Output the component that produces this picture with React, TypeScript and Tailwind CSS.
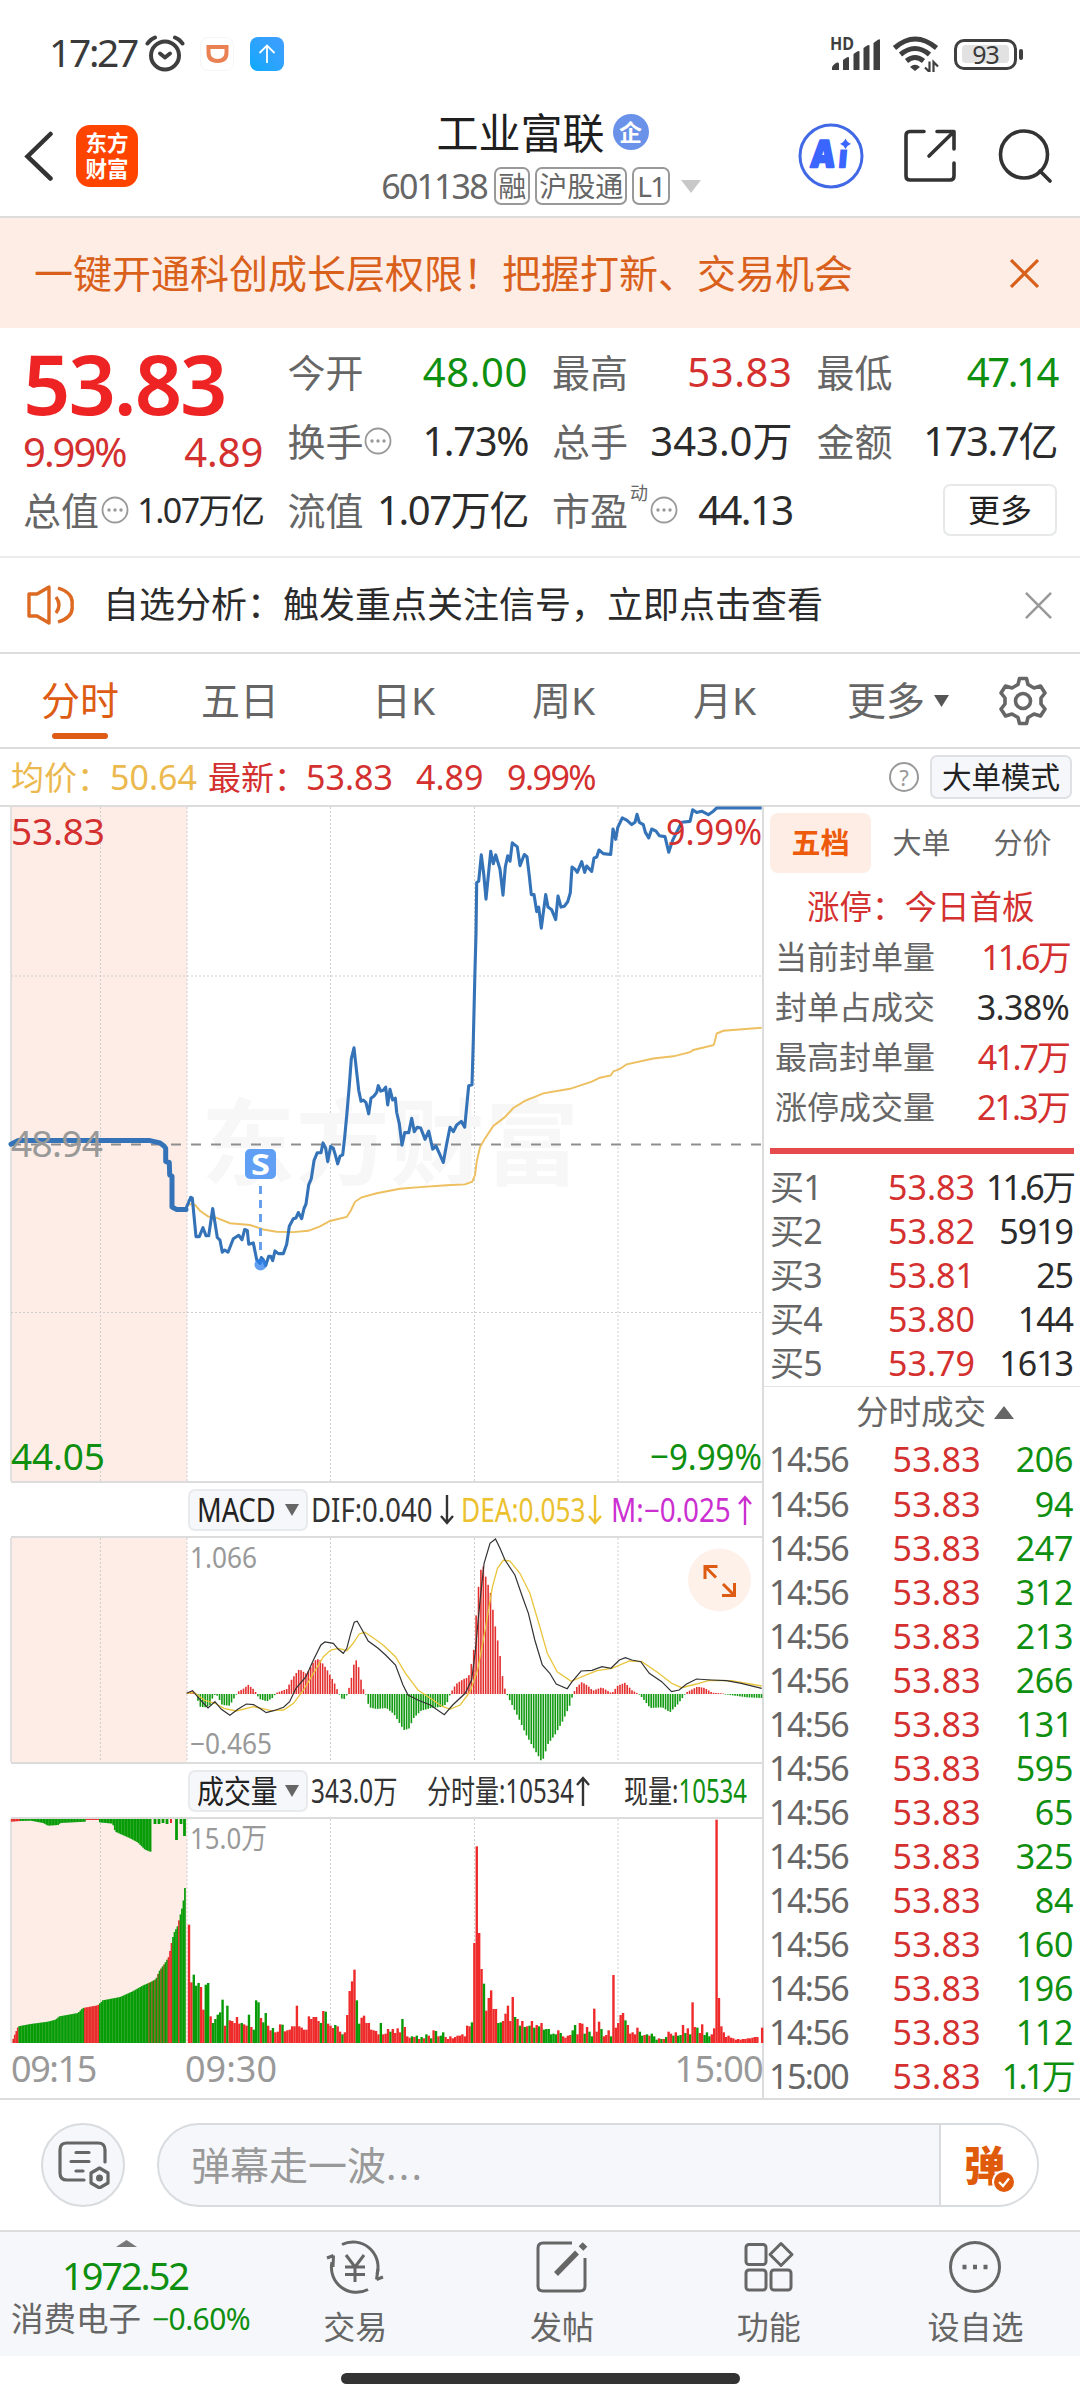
import type { ReactNode } from "react";

type Point = [number, number];

const quotes = [
  { label: "今开", value: "48.00", color: "text-[#0f8f0f] tracking-[0.015em]" },
  { label: "最高", value: "53.83", color: "text-[#d3302f] tracking-[0.015em]" },
  { label: "最低", value: "47.14", color: "text-[#0f8f0f] tracking-[-0.06em]" },
  { label: "换手", value: "1.73%", color: "text-[#2b2b2b] tracking-[-0.035em]", info: true },
  { label: "总手", value: "343.0万", color: "text-[#2b2b2b]" },
  { label: "金额", value: "173.7亿", color: "text-[#2b2b2b] tracking-[-0.035em]" },
];

const periods = [
  { name: "五日", cls: "w-[171px]" },
  { name: "日K", cls: "w-[160px]" },
  { name: "周K", cls: "w-[161px]" },
  { name: "月K", cls: "w-[154px]" },
];

const limitRows = [
  { label: "当前封单量", value: "11.6万", color: "text-[#d3302f] tracking-[-0.08em]" },
  { label: "封单占成交", value: "3.38%", color: "text-[#2b2b2b] tracking-[-0.02em]" },
  { label: "最高封单量", value: "41.7万", color: "text-[#d3302f] tracking-[-0.06em]" },
  { label: "涨停成交量", value: "21.3万", color: "text-[#d3302f] tracking-[-0.055em]" },
];

const bids = [
  ["买1", "53.83", "11.6万"],
  ["买2", "53.82", "5919"],
  ["买3", "53.81", "25"],
  ["买4", "53.80", "144"],
  ["买5", "53.79", "1613"],
];

const trades = [
  ["14:56", "206"],
  ["14:56", "94"],
  ["14:56", "247"],
  ["14:56", "312"],
  ["14:56", "213"],
  ["14:56", "266"],
  ["14:56", "131"],
  ["14:56", "595"],
  ["14:56", "65"],
  ["14:56", "325"],
  ["14:56", "84"],
  ["14:56", "160"],
  ["14:56", "196"],
  ["14:56", "112"],
  ["15:00", "1.1万"],
];

// call auction, 09:15 - 09:30
const auction: Point[] = [
  [33, 771], [55, 763], [450, 763], [480, 768], [492, 775], [497, 780], [497, 810], [508, 812],
  [509, 840], [516, 843], [516, 912], [530, 917], [558, 917],
];

const price: Point[] = [
  [558, 915], [572, 890], [577, 892], [588, 978], [598, 978], [609, 958], [618, 976], [626, 976],
  [638, 915], [652, 980], [660, 986], [667, 1013], [674, 1008], [684, 1013], [700, 983], [716, 975],
  [726, 985], [734, 962], [742, 964], [746, 995], [760, 992], [770, 1030], [780, 1038], [784, 1025],
  [790, 1030], [797, 1043], [806, 1022], [812, 1022], [818, 1032], [825, 1010], [835, 1016], [850, 1016],
  [860, 995], [868, 955], [880, 938], [888, 936], [895, 924], [905, 938], [912, 915], [918, 905],
  [926, 862], [934, 848], [942, 808], [952, 790], [963, 790], [969, 768], [977, 780], [983, 810],
  [992, 776], [1000, 780], [1006, 795], [1013, 815], [1020, 798], [1028, 795], [1034, 755], [1041, 700],
  [1048, 640], [1054, 580], [1062, 555], [1070, 610], [1076, 650], [1083, 675], [1090, 672], [1098, 678],
  [1106, 703], [1113, 668], [1122, 663], [1130, 655], [1135, 640], [1142, 652], [1150, 650], [1157, 643],
  [1163, 683], [1170, 648], [1178, 672], [1186, 668], [1190, 700], [1198, 725], [1206, 773], [1214, 745],
  [1226, 745], [1235, 713], [1243, 743], [1252, 733], [1262, 735], [1275, 760], [1286, 742], [1298, 782],
  [1308, 775], [1320, 795], [1330, 812], [1340, 770], [1350, 733], [1360, 743], [1370, 728], [1384, 720],
  [1394, 733], [1406, 640], [1416, 638], [1420, 540], [1425, 380], [1428, 300], [1430, 185], [1436, 182],
  [1444, 123], [1451, 165], [1458, 222], [1472, 115], [1480, 143], [1487, 123], [1500, 155], [1509, 213],
  [1516, 150], [1523, 125], [1530, 137], [1537, 96], [1552, 105], [1560, 147], [1573, 122], [1581, 127],
  [1588, 170], [1594, 212], [1602, 212], [1610, 250], [1616, 240], [1624, 287], [1637, 212], [1644, 240],
  [1655, 246], [1667, 268], [1674, 215], [1683, 240], [1693, 238], [1703, 228], [1711, 208], [1716, 150],
  [1725, 155], [1732, 162], [1745, 138], [1754, 162], [1760, 148], [1775, 160], [1782, 130], [1790, 128],
  [1797, 112], [1810, 120], [1832, 122], [1839, 65], [1847, 88], [1853, 62], [1867, 40], [1880, 45],
  [1895, 55], [1905, 50], [1911, 32], [1918, 50], [1930, 55], [1936, 72], [1946, 85], [1955, 65],
  [1968, 70], [1978, 80], [1995, 82], [2006, 117], [2018, 90], [2030, 72], [2045, 50], [2070, 48],
  [2078, 22], [2090, 28], [2105, 25], [2125, 33], [2140, 25], [2150, 18], [2285, 18],
];

const average: Point[] = [
  [558, 908], [575, 905], [585, 907], [600, 920], [625, 933], [650, 936], [690, 948], [750, 952],
  [790, 962], [830, 967], [880, 968], [925, 965], [960, 955], [990, 943], [1040, 934], [1052, 920],
  [1065, 900], [1085, 890], [1130, 881], [1200, 871], [1260, 867], [1340, 863], [1395, 861], [1417, 855],
  [1425, 840], [1430, 810], [1440, 778], [1455, 758], [1480, 730], [1515, 710], [1540, 690], [1575, 674],
  [1630, 657], [1710, 647], [1775, 631], [1800, 622], [1832, 617], [1840, 608], [1860, 602], [1880, 592],
  [1960, 579], [2020, 574], [2070, 565], [2080, 560], [2140, 549], [2143, 545], [2150, 523], [2170, 517],
  [2285, 510],
];

const dif: Point[] = [
  [375, 640], [387, 632], [400, 655], [418, 684], [432, 665], [445, 688], [462, 706], [478, 688],
  [495, 672], [510, 674], [522, 685], [535, 698], [550, 692], [570, 682], [582, 665], [595, 625],
  [615, 590], [630, 540], [645, 495], [653, 486], [670, 490], [680, 508], [690, 520], [697, 505],
  [705, 460], [712, 427], [718, 424], [728, 450], [740, 483], [760, 505], [775, 525], [795, 555],
  [810, 615], [820, 645], [840, 660], [865, 675], [893, 704], [910, 675], [935, 640], [948, 600],
  [955, 520], [965, 360], [973, 250], [985, 190], [996, 177], [1005, 205], [1015, 240], [1035, 285],
  [1050, 350], [1062, 400], [1075, 480], [1090, 555], [1105, 580], [1118, 612], [1140, 626], [1150, 605],
  [1168, 573], [1190, 571], [1210, 560], [1228, 565], [1245, 540], [1257, 533], [1270, 540], [1288, 545],
  [1305, 580], [1330, 605], [1350, 635], [1365, 630], [1380, 612], [1400, 597], [1430, 600], [1460, 602],
  [1490, 610], [1531, 625],
];

const dea: Point[] = [
  [375, 640], [390, 637], [410, 660], [432, 670], [450, 685], [475, 693], [510, 680], [545, 692],
  [570, 690], [590, 670], [610, 630], [630, 580], [650, 530], [665, 510], [680, 505], [697, 512],
  [710, 490], [722, 462], [733, 457], [745, 468], [770, 495], [795, 530], [815, 580], [840, 630],
  [865, 655], [890, 680], [905, 687], [925, 675], [945, 635], [960, 570], [975, 450], [990, 320],
  [1000, 265], [1012, 240], [1025, 243], [1045, 280], [1065, 340], [1085, 440], [1100, 520], [1120, 575],
  [1148, 604], [1170, 590], [1200, 572], [1230, 565], [1265, 543], [1290, 545], [1320, 575], [1350, 610],
  [1370, 623], [1400, 612], [1425, 601], [1470, 602], [1531, 618],
];

const histogram: Point[] = [
  [375, 0], [385, 12], [392, 0], [400, -38], [410, -40], [420, -35], [428, -2], [435, -5], [445, -33],
  [460, -35], [472, -5], [478, 8], [490, 18], [497, 28], [510, 12], [514, 0], [520, -15], [535, -22],
  [548, -10], [553, 3], [575, 15], [585, 45], [600, 75], [615, 60], [630, 100], [640, 106], [655, 75],
  [670, 35], [680, 0], [688, -20], [697, 0], [705, 50], [712, 108], [718, 90], [727, 20], [735, -5],
  [740, -40], [755, -45], [775, -42], [790, -60], [810, -108], [820, -105], [830, -72], [845, -50],
  [865, -42], [890, -38], [900, -20], [903, 0], [915, 30], [930, 45], [940, 50], [950, 120], [957, 270],
  [962, 350], [968, 395], [975, 350], [985, 300], [992, 220], [1000, 150], [1006, 90], [1010, 30],
  [1017, 0], [1020, -10], [1040, -70], [1055, -120], [1070, -160], [1088, -205], [1100, -150],
  [1115, -120], [1130, -80], [1145, -30], [1150, 0], [1157, 20], [1168, 36], [1180, 25], [1190, 10],
  [1208, 20], [1222, 8], [1228, 2], [1240, 25], [1255, 34], [1268, 12], [1282, 0], [1290, -12],
  [1305, -42], [1330, -40], [1345, -55], [1360, -32], [1372, -8], [1378, 5], [1400, 22], [1415, 18],
  [1430, 4], [1450, 2], [1465, -3], [1500, -10], [1531, -12],
];

// one entry a minute, negative = falling
const volume = [
  355, 182, -205, -172, -180, 168, 100, -175, -180, 80, -60, -72, -85, -92, -130, 52, -112, 68, 66, 60,
  78, 58, -60, 56, 52, -85, 48, -40, -128, -122, 75, -62, -90, 52, 38, -45, 32, 34, 56, -55,
  35, 38, 40, 50, 50, 112, 50, 46, 40, 40, 80, 72, 78, 78, 66, -60, 96, -94, 58, 52,
  45, -54, 50, 34, -26, 32, 84, 156, 185, 220, -128, -58, 76, 82, 60, 60, 40, 38, 36, 26,
  -60, 26, 28, 42, -34, 42, 30, 44, 32, -72, 48, 20, 16, -20, 18, -22, 12, -18, 14, -26,
  22, -14, 38, -36, 20, -22, -32, 18, 12, 20, 14, 18, 22, 22, 26, 20, 52, 50, -62, 300,
  590, 330, 222, -178, 97, 135, 158, 102, 102, -60, -62, 66, 88, 112, 66, 138, -78, 72, -52, 66,
  -48, 50, -52, 66, -46, 54, -50, 60, -40, -42, -42, -26, -28, -26, 38, -30, 20, 16, 22, 24,
  -38, -54, 26, 60, 58, -28, 48, -34, -20, 103, 34, 64, -42, 20, 24, 38, -20, 204, 46, 60,
  84, 90, -68, 54, 28, 32, 26, 46, -34, -22, 24, -26, 22, -28, -20, -10, 14, -12, 12, -18,
  34, 28, -22, 32, -22, -24, 54, -30, 44, -26, 122, 48, -46, 30, 56, -24, -32, -20, 26, 44,
  670, 135, 50, 32, 18, 22, 16, 14, 10, 12, 10, 12, 12, 14, 14, 16, 18, 18, 0, 46,
];

const auctionVolume: Point[] = [
  [22, 0], [28, 25], [35, 50], [60, 57], [95, 64], [110, 70], [118, 80], [155, 90], [165, 105], [195, 113],
  [205, 128], [240, 138], [265, 155], [285, 172], [300, 182], [312, 192], [318, 215], [330, 240],
  [338, 260], [343, 300], [348, 330], [355, 350], [360, 380], [366, 415], [370, 465], [373, 465],
];

const unmatched: Point[] = [
  [22, 8], [38, 6], [60, 5], [85, 12], [95, 20], [115, 18], [120, 12], [170, 8], [172, 3], [197, 3],
  [198, 10], [225, 14], [230, 38], [245, 48], [260, 58], [275, 70], [290, 92], [300, 98], [303, 98],
];

const line = (points: Point[], sx: number, sy: number, dy: number) =>
  points.map(([x, y]) => `${(x / sx - 11).toFixed(1)},${(y / sy - dy).toFixed(1)}`).join(" ");

const sample = (points: Point[], x: number) => {
  const i = points.findIndex((p) => p[0] >= x);
  if (i <= 0) return points[i === 0 ? 0 : points.length - 1][1];
  const [x0, y0] = points[i - 1];
  const [x1, y1] = points[i];
  return y0 + ((y1 - y0) * (x - x0)) / (x1 - x0);
};

const Squeeze = ({ width, scale, children }: { width: string; scale: string; children: ReactNode }) => (
  <span className={`${width} shrink-0`}>
    <span className={`inline-block origin-left whitespace-nowrap ${scale}`}>{children}</span>
  </span>
);

const InfoDots = () => (
  <svg className="size-[28px] shrink-0" viewBox="0 0 28 28" fill="none" stroke="#999">
    <circle cx="14" cy="14" r="12.500" strokeWidth="1.800" />
    <g fill="#999" stroke="none">
      <circle cx="8" cy="14" r="1.700" />
      <circle cx="14" cy="14" r="1.700" />
      <circle cx="20" cy="14" r="1.700" />
    </g>
  </svg>
);

const Cross = ({ className, width }: { className: string; width: number }) => (
  <svg className={className} viewBox="0 0 28 28" fill="none" stroke="currentColor" strokeWidth={width}>
    <path d="M1 1L27 27M27 1L1 27" />
  </svg>
);

const Grid = ({ height }: { height: number }) => (
  <>
    <rect width="176" height={height} fill="#fdede6" />
    <g stroke="#cfcfcf" strokeWidth="1" strokeDasharray="2 2">
      {[89.5, 176, 319.5, 463.5, 607].map((x) => (
        <line key={x} x1={x} x2={x} y1="0" y2={height} />
      ))}
    </g>
    <path d={`M0 0V${height}`} stroke="#d9d9d9" strokeWidth="1.500" />
  </>
);

const StatusBar = () => (
  <div className="flex h-[108px] items-center pl-[49px] pr-[57px] text-[#3a3a3a]">
    <span className="-mt-[3px] w-[95px] text-[39px] tracking-[-0.06em]">17:27</span>
    <svg className="h-[38px] w-[42px]" viewBox="0 0 42 38" fill="none" stroke="#3f3f3f" strokeWidth="4" strokeLinecap="round" strokeLinejoin="round">
      <circle cx="21" cy="20.500" r="14" />
      <path d="M16 18.500L21 22.500L26 18.500" />
      <path d="M3.500 8.500Q6 4.500 11 2.500M38.500 8.500Q36 4.500 31 2.500" />
    </svg>
    <div className="ml-[14px] flex h-[34px] w-[34px] items-center justify-center rounded-lg border border-[#f6f6f6]">
      <svg className="h-[20px] w-[23px]" viewBox="0 0 23 20" fill="none" stroke="#ea8152" strokeWidth="4">
        <path d="M.5 3H20.500V8.500Q20.500 17 11.500 17Q2.500 17 2.500 8.500V3" />
      </svg>
    </div>
    <div className="ml-[16px] flex size-[34px] items-center justify-center rounded-lg bg-gradient-to-bl from-[#3f9dff] to-[#02a9fb]">
      <svg className="h-[20px] w-[18px]" viewBox="0 0 18 20" fill="none" stroke="#fff" strokeWidth="1.800">
        <path d="M9 19V2M1.500 9L9 1.500L16.500 9" />
      </svg>
    </div>
    <div className="ml-auto flex items-center">
      <svg className="h-[36px] w-[50px] overflow-visible" viewBox="0 0 50 36">
        <text x="0" y="13.500" fontSize="17" fontWeight="700" textLength="24" lengthAdjust="spacingAndGlyphs" fill="#3f3f3f">HD</text>
        <g fill="#3f3f3f">
          <path d="M2 32Q2 29 7 26.500Q9 26 9 28V34H2Z" />
          <path d="M13 24Q19 19.500 19 22V34H13Z" />
          <path d="M23.500 18Q29.500 13.500 29.500 16V34H23.500Z" />
          <path d="M33.500 12Q39.500 7.500 39.500 10V34H33.500Z" />
          <path d="M43.500 7Q50 1.500 50 4V34H43.500Z" />
        </g>
      </svg>
      <svg className="ml-[12px] h-[36px] w-[48px]" viewBox="0 0 48 36" fill="none" stroke="#3f3f3f" strokeWidth="5">
        <path d="M2.500 12Q23 -6 44.500 12M8.500 18.500Q23 6.500 37.500 18.500M14.500 25Q23 18 31.500 25" />
        <path d="M18 31L23 35L28 31Q23 26.500 18 31Z" fill="#3f3f3f" stroke="none" />
        <path d="M37.500 25.500V36L33 31.500M41.500 36V26L46 30.500" strokeWidth="2.200" />
      </svg>
      <div className="ml-[14px] flex h-[31px] w-[63px] items-center justify-center rounded-[10px] border-[3px] border-[#3f3f3f]">
        <div className="flex h-[18px] w-[47px] items-center justify-center rounded-sm bg-[#e2e2e2] text-[25px] leading-none tracking-[-0.04em]">93</div>
      </div>
      <div className="ml-[2px] h-[11px] w-[4px] rounded-full bg-[#3f3f3f]" />
    </div>
  </div>
);

const Header = () => (
  <div className="flex h-[110px] border-b-2 border-[#dcdcdc] pl-[24px] pr-[28px]">
    <div className="flex w-[344px] items-center pb-[12px]">
      <svg className="h-[50px] w-[30px]" viewBox="0 0 30 50" fill="none" stroke="#333" strokeWidth="4.500" strokeLinecap="round">
        <path d="M26.500 3L3.500 25.500L26.500 47.500" />
      </svg>
      <div className="ml-[22px] flex size-[62px] flex-col items-center justify-center rounded-[14px] bg-[#ff4400] text-[21.500px] font-semibold leading-[26px] text-white">
        <span>东方</span>
        <span>财富</span>
      </div>
    </div>
    <div className="flex w-[346px] flex-col items-center">
      <div className="flex h-[48px] items-center pl-[3px] text-[42px] text-[#1f1f1f]">
        工业富联
        <span className="ml-[8px] flex size-[36px] items-center justify-center rounded-full bg-[#6a92e8] text-[23px] font-bold leading-none text-white">企</span>
      </div>
      <div className="mt-[10px] flex items-center gap-[5px] text-[#666]">
        <span className="mr-[1px] w-[107px] text-[34px] leading-[40px] tracking-[-0.055em]">601138</span>
        <span className="flex h-[38px] items-center rounded-[7px] border-2 border-[#999] px-[2px] text-[28px]">融</span>
        <span className="flex h-[38px] items-center rounded-[7px] border-2 border-[#999] px-[2px] text-[28px]">沪股通</span>
        <span className="flex h-[38px] items-center rounded-[7px] border-2 border-[#999] px-[3px] text-[28px] tracking-[-0.06em]">L1</span>
        <svg className="ml-[6px] h-[13px] w-[20px]" viewBox="0 0 20 13" fill="#c8c8c8">
          <path d="M0 0H20L10 13Z" />
        </svg>
      </div>
    </div>
    <div className="ml-auto flex items-center gap-[40px] pb-[13px]">
      <svg className="size-[66px]" viewBox="0 0 66 66">
        <circle cx="33" cy="33" r="31" fill="none" stroke="#4169e6" strokeWidth="3" />
        <g fontSize="37" fontWeight="900" fill="#3a66ff" stroke="#3a66ff" strokeWidth="2.500" strokeLinejoin="round" transform="translate(4 0) skewX(-5)">
          <text x="12.500" y="44.500" textLength="23" lengthAdjust="spacingAndGlyphs">A</text>
          <text x="40" y="44.500" textLength="8.500" lengthAdjust="spacingAndGlyphs">i</text>
        </g>
        <rect x="40" y="12" width="14" height="14.500" fill="#fff" />
        <path d="M47.500 15.500Q49 19.500 53 20.800Q49 22.500 47.500 26Q46 22.500 42 20.800Q46 19.500 47.500 15.500Z" fill="#3a66ff" />
      </svg>
      <svg className="size-[54px]" viewBox="0 0 54 54" fill="none" stroke="#333" strokeWidth="3.600" strokeLinejoin="round" strokeLinecap="round">
        <path d="M20 2.500H6Q2 2.500 2 6.500V47Q2 51 6 51H46Q50 51 50 47V34M33 2.500H50V20M49 3.500L25 27" />
      </svg>
      <svg className="size-[54px]" viewBox="0 0 54 54" fill="none" stroke="#333" strokeWidth="3.600" strokeLinecap="round">
        <circle cx="26" cy="25.500" r="23.500" />
        <path d="M42 42L52 52" />
      </svg>
    </div>
  </div>
);

const Quote = () => (
  <section className="grid h-[230px] grid-cols-4 grid-rows-[69px_69px_69px] gap-x-[24px] border-b-2 border-[#ececec] px-[23px] pt-[9px] text-[40px] leading-none">
    <div className="row-span-2 flex flex-col text-[#d3302f]">
      <span className="mt-[8px] text-[83px] font-semibold leading-[76px] tracking-[-0.025em] text-[#ee2424]">53.83</span>
      <div className="mt-[11px] flex justify-between">
        <span className="tracking-[-0.05em]">9.99%</span>
        <span>4.89</span>
      </div>
    </div>
    {quotes.map((q) => (
      <div key={q.label} className="flex items-center justify-between">
        <span className="flex items-center text-[38px] text-[#666]">
          {q.label}
          {q.info && <InfoDots />}
        </span>
        <span className={`whitespace-nowrap ${q.color}`}>{q.value}</span>
      </div>
    ))}
    <div className="flex items-center justify-between">
      <span className="flex items-center gap-[2px] text-[38px] text-[#666]">总值<InfoDots /></span>
      <span className="whitespace-nowrap text-[34px] tracking-[-0.045em] text-[#2b2b2b]">1.07万亿</span>
    </div>
    <div className="flex items-center justify-between">
      <span className="text-[38px] text-[#666]">流值</span>
      <span className="whitespace-nowrap tracking-[-0.035em] text-[#2b2b2b]">1.07万亿</span>
    </div>
    <div className="flex items-center justify-between">
      <span className="flex items-center text-[38px] text-[#666]">
        市盈
        <span className="mb-[34px] ml-[2px] mr-[2px] text-[18px]">动</span>
        <InfoDots />
      </span>
      <span className="tracking-[-0.04em] text-[#2b2b2b]">44.13</span>
    </div>
    <div className="flex items-center justify-end">
      <button className="h-[52px] w-[114px] rounded-[7px] border-2 border-[#e6e8ea] text-[32px] leading-none text-[#222]">更多</button>
    </div>
  </section>
);

const Tabs = () => (
  <nav className="flex h-[95px] items-center border-b-2 border-[#dcdcdc] pl-[41px] text-[39px] text-[#666]">
    <div className="relative w-[160px] text-[#dd5b12]">
      分时
      <span className="absolute left-[11px] top-[62px] h-[6px] w-[56px] rounded-full bg-[#dd5b12]" />
    </div>
    {periods.map((p) => (
      <div key={p.name} className={p.cls}>{p.name}</div>
    ))}
    <div className="flex w-[151px] items-center">
      更多
      <svg className="ml-[9px] h-[12px] w-[15px]" viewBox="0 0 15 12" fill="#555">
        <path d="M0 0H15L7.500 12Z" />
      </svg>
    </div>
    <svg className="size-[50px]" viewBox="0 0 50 50" fill="none" stroke="#666" strokeWidth="3.600" strokeLinejoin="round">
      <path d="M21.500 2.500H28.500L30 8.500L36 12L42.500 10L47 17L43 22V28L47 33L42.500 40L36 38L30 41.500L28.500 47.500H21.500L20 41.500L14 38L7.500 40L3 33L7 28V22L3 17L7.500 10L14 12L20 8.500Z" />
      <circle cx="25" cy="25" r="7.500" />
    </svg>
  </nav>
);

const PriceChart = () => (
  <svg className="h-[674px] w-[752px] overflow-visible" viewBox="0 0 752 674">
    <Grid height={674} />
    <g stroke="#cfcfcf" strokeDasharray="2 2">
      <path d="M0 169H752M0 505.500H752" />
    </g>
    <text x="190" y="371" fontSize="94" fontWeight="700" textLength="378" fill="#f7f7f7">东方财富</text>
    <path d="M0 337.500H752" stroke="#8e8e8e" strokeWidth="1.800" strokeDasharray="10 10" />
    <polyline points={line(average, 3, 2.24, 7)} fill="none" stroke="#edbf5e" strokeWidth="1.900" />
    <polyline points={line(auction, 3, 2.24, 7)} fill="none" stroke="#3573b8" strokeWidth="5" strokeLinejoin="round" strokeLinecap="round" />
    <polyline points={line(price, 3, 2.24, 7)} fill="none" stroke="#3573b8" strokeWidth="3.100" strokeLinejoin="round" />
    <path d="M249.500 379V446" stroke="#68a0ee" strokeWidth="3" strokeDasharray="8 6" />
    <circle cx="249.500" cy="457.500" r="6" fill="#2f80ed" opacity=".75" />
    <rect x="234" y="342" width="31" height="30" rx="5" fill="#619ff5" />
    <text x="249.500" y="367.500" fontSize="28" fontWeight="700" textAnchor="middle" textLength="19" lengthAdjust="spacingAndGlyphs" fill="#fff">S</text>
    <g fontSize="37">
      <text x="0" y="38" textLength="94" fill="#d3302f">53.83</text>
      <text x="751" y="38" textAnchor="end" textLength="96" lengthAdjust="spacingAndGlyphs" fill="#d3302f">9.99%</text>
      <text x="0" y="350" textLength="92" fill="#999">48.94</text>
      <text x="0" y="663" textLength="94" fill="#0f8f0f">44.05</text>
      <text x="751" y="663" textAnchor="end" textLength="112" lengthAdjust="spacingAndGlyphs" fill="#0f8f0f">−9.99%</text>
    </g>
  </svg>
);

const MacdChart = () => (
  <svg className="h-[224px] w-[752px] overflow-visible" viewBox="0 0 752 224">
    <Grid height={224} />
    {volume.map((_, i) => {
      const x = 377 + i * 4.82;
      const h = sample(histogram, x) / 3;
      return <rect key={i} x={x / 2.01 - 11} y={h > 0 ? 156 - h : 156} width="1.600" height={Math.max(Math.abs(h), 0.6)} fill={h > 0 ? "#e32f2e" : "#119a11"} />;
    })}
    <polyline points={line(dea, 2.01, 3, 58)} fill="none" stroke="#e9c53c" strokeWidth="1.300" />
    <polyline points={line(dif, 2.01, 3, 58)} fill="none" stroke="#333" strokeWidth="1.200" />
    <g fontSize="29" fill="#999">
      <text x="179" y="30" textLength="67" lengthAdjust="spacingAndGlyphs">1.066</text>
      <text x="179" y="216" textLength="82" lengthAdjust="spacingAndGlyphs">−0.465</text>
    </g>
    <circle cx="708.500" cy="42" r="31.500" fill="#fef1ea" />
    <path d="M694 41V28.500H706.500M694.500 29L705 39.500M711 57.500H723.500V45M723 57L712 46" fill="none" stroke="#dd5b12" strokeWidth="3" />
  </svg>
);

const VolumeChart = () => (
  <svg className="h-[224px] w-[752px] overflow-visible" viewBox="0 0 752 224">
    <Grid height={224} />
    {Array.from({ length: 117 }, (_, i) => {
      const x = 22 + i * 3;
      const h = sample(auctionVolume, x) / 3;
      const red = x < 35 || (x > 168 && x < 197) || (x > 335 && x < 344) || x === 358;
      const mixed = x > 297 && x < 332 && i % 2 === 0;
      return <rect key={i} x={x / 2.01 - 11} y={224 - h} width="1.700" height={h} fill={red ? "#e82b2b" : mixed ? "#7c5b12" : "#079c07"} />;
    })}
    {Array.from({ length: 94 }, (_, i) => {
      const x = 22 + i * 3;
      return <rect key={i} x={x / 2.01 - 11} y="0" width="1.700" height={sample(unmatched, x) / 3} fill={x < 38 || (x > 171 && x < 198) ? "#e82b2b" : "#079c07"} />;
    })}
    <path d="M144 0V5M148 0V5M152 0V4M156 0V5M165.500 0V21M170 0V5M173.500 0V17" stroke="#079c07" strokeWidth="2.800" />
    <path d="M160 0V4" stroke="#e82b2b" strokeWidth="2" />
    {volume.map((v, i) => (
      <rect key={i} x={(377.5 + i * 4.82) / 2.01 - 11} y={224 - Math.abs(v) / 3} width="2.400" height={Math.abs(v) / 3} fill={v > 0 ? "#ee2a2a" : "#079c07"} />
    ))}
    <text x="179" y="30" fontSize="29" fill="#999" textLength="77" lengthAdjust="spacingAndGlyphs">15.0万</text>
  </svg>
);

const Arrow = ({ up }: { up?: boolean }) => (
  <svg className="h-[30px] w-[14px] shrink-0" viewBox="0 0 14 30" fill="none" stroke="currentColor" strokeWidth="2.400">
    <path d={up ? "M7 30V2M1 9L7 2L13 9" : "M7 0V28M1 21L7 28L13 21"} />
  </svg>
);

const IndicatorButton = ({ children }: { children: ReactNode }) => (
  <button className="flex h-[42px] w-[120px] shrink-0 items-center rounded-[7px] border-2 border-[#e8eaed] bg-[#f6f7fa] pl-[7px] text-left text-[#222]">
    {children}
    <svg className="h-[12px] w-[14px] shrink-0" viewBox="0 0 14 12" fill="#666">
      <path d="M0 0H14L7 12Z" />
    </svg>
  </button>
);

const Charts = () => (
  <div className="w-[764px] shrink-0 border-r-2 border-[#dcdcdc] pl-[11px] text-[32px] leading-none">
    <PriceChart />
    <div className="flex h-[57px] w-[752px] items-center border-y-2 border-[#dcdcdc] pl-[177px] text-[#333]">
      <IndicatorButton>
        <Squeeze width="w-[88px]" scale="scale-x-[0.85]">MACD</Squeeze>
      </IndicatorButton>
      <span className="ml-[3px] flex items-center">
        <Squeeze width="w-[129px]" scale="scale-x-[0.86]">DIF:0.040</Squeeze>
        <Arrow />
      </span>
      <span className="ml-[7px] flex items-center text-[#ebc12f]">
        <Squeeze width="w-[127px]" scale="scale-x-[0.82]">DEA:0.053</Squeeze>
        <Arrow />
      </span>
      <span className="ml-[9px] flex items-center text-[#cc2fd0]">
        <Squeeze width="w-[127px]" scale="scale-x-[0.87]">M:−0.025</Squeeze>
        <Arrow up />
      </span>
    </div>
    <MacdChart />
    <div className="flex h-[57px] w-[752px] items-center border-y-2 border-[#dcdcdc] pl-[177px] text-[#333]">
      <IndicatorButton>
        <Squeeze width="w-[88px]" scale="scale-x-[0.84]">成交量</Squeeze>
      </IndicatorButton>
      <span className="ml-[3px] flex items-center">
        <Squeeze width="w-[116px]" scale="scale-x-[0.76]">343.0万</Squeeze>
        <Squeeze width="w-[149px]" scale="scale-x-[0.75]">分时量:10534</Squeeze>
        <Arrow up />
        <Squeeze width="w-[160px]" scale="scale-x-[0.75] ml-[34px]">
          现量:<span className="text-[#0f8f0f]">10534</span>
        </Squeeze>
      </span>
    </div>
    <VolumeChart />
    <div className="flex h-[52px] w-[752px] items-center text-[36px] text-[#999]">
      <span className="w-[174px] tracking-[-0.04em]">09:15</span>
      <span>09:30</span>
      <span className="ml-auto tracking-[-0.02em]">15:00</span>
    </div>
  </div>
);

const OrderBook = () => (
  <div className="flex flex-1 flex-col text-[34px] leading-none">
    <div className="flex h-[70px] items-center pl-[6px] pt-[2px] text-[29px] text-[#666]">
      <span className="flex h-[60px] w-[101px] items-center justify-center rounded-[8px] bg-[#feede5] font-bold text-[#ee5a0c]">五档</span>
      <span className="w-[101px] text-center">大单</span>
      <span className="w-[101px] text-center">分价</span>
    </div>
    <div className="mt-[5px] flex h-[50px] items-center pl-[43px] text-[32.500px] text-[#d3302f]">涨停：今日首板</div>
    {limitRows.map((r) => (
      <div key={r.label} className="flex h-[50px] items-center justify-between pl-[11px] pr-[11px]">
        <span className="text-[32px] text-[#666]">{r.label}</span>
        <span className={r.color}>{r.value}</span>
      </div>
    ))}
    <div className="ml-[6px] mr-[6px] mt-[16px] h-[6px] bg-[#e54a4c]" />
    <div className="mt-[11px] border-b border-[#e4e4e4]">
      {bids.map(([level, bid, size]) => (
        <div key={level} className="flex h-[44.200px] items-center pl-[6px] pr-[7px]">
          <span className="w-[60px] tracking-[-0.02em] text-[#666]">{level}</span>
          <span className="w-[145px] text-right text-[#d3302f]">{bid}</span>
          <span className={`flex-1 whitespace-nowrap text-right text-[#2b2b2b] ${size.endsWith("万") ? "tracking-[-0.085em]" : "tracking-[-0.03em]"}`}>{size}</span>
        </div>
      ))}
    </div>
    <div className="flex h-[51px] items-center pl-[92px] text-[32.500px] text-[#666]">
      分时成交
      <svg className="ml-[8px] h-[13px] w-[20px]" viewBox="0 0 20 13" fill="#666">
        <path d="M0 13L10 0L20 13Z" />
      </svg>
    </div>
    {trades.map(([time, size], i) => (
      <div key={i} className="flex h-[44.100px] items-center pl-[5px] pr-[7px]">
        <span className="w-[90px] tracking-[-0.045em] text-[#666]">{time}</span>
        <span className="w-[122px] text-right tracking-[0.01em] text-[#d3302f]">53.83</span>
        <span className={`flex-1 text-right text-[#0f8f0f] ${size.endsWith("万") ? "tracking-[-0.08em]" : "tracking-[-0.01em]"}`}>{size}</span>
      </div>
    ))}
  </div>
);

const CommentBar = () => (
  <div className="flex h-[134px] items-center border-b-2 border-t-2 border-[#dcdcdc] pl-[41px] pr-[41px]">
    <div className="flex size-[84px] items-center justify-center rounded-full border-2 border-[#d9dcdf] bg-[#f6f7fa]">
      <svg className="ml-[2px] h-[48px] w-[52px]" viewBox="0 0 52 48" fill="none" stroke="#666" strokeWidth="3.200" strokeLinecap="round">
        <path d="M26 39H9Q2 39 2 32V9Q2 2 9 2H40Q47 2 47 9V21M18 11.500H31M13 20.500H31M18 30H25" />
        <path d="M41.500 27L50 32V42L41.500 47L33 42V32Z" strokeLinejoin="round" />
        <circle cx="41.500" cy="37" r="2.500" fill="#666" strokeWidth="2" />
      </svg>
    </div>
    <div className="ml-[32px] flex h-[84px] flex-1 overflow-hidden rounded-full border-2 border-[#d9dcdf] bg-[#f6f7fa]">
      <div className="flex flex-1 items-center pl-[32px] text-[39px] text-[#999]">
        弹幕走一波<span className="tracking-[0.06em]">...</span>
      </div>
      <div className="relative flex w-[98px] items-center border-l-2 border-[#d9dcdf] bg-white pl-[23px] text-[41px] font-black leading-none text-[#e05a0c]">
        弹
        <svg className="absolute left-[51px] top-[45px] size-[24px]" viewBox="0 0 24 24">
          <circle cx="12" cy="12" r="11" fill="#e05a0c" stroke="#fff" strokeWidth="2" />
          <path d="M7 12L11 16L17 8.500" fill="none" stroke="#fff" strokeWidth="2.400" />
        </svg>
      </div>
    </div>
  </div>
);

const navItems = [
  {
    name: "交易",
    icon: (
      <>
        <path d="M17 5.500A25 25 0 0 1 52 35M43 50.500A25 25 0 0 1 7 23" />
        <path d="M2 19L8.500 16.500M8.500 16.500L8 28M58 38L51.500 40.500M51.500 40.500L53 30" />
        <path d="M21 16L30 28L39 16M30 28V43M20 28H40M20 35.500H40" />
      </>
    ),
  },
  {
    name: "发帖",
    icon: (
      <>
        <path d="M40 4H11Q6 4 6 9V47Q6 52 11 52H48Q53 52 53 47V19" />
        <path d="M24 35L45 13.500" strokeWidth="5.500" />
        <path d="M49 9.500L53 5.500" strokeWidth="6.500" />
      </>
    ),
  },
  {
    name: "功能",
    icon: (
      <>
        <rect x="7" y="5.500" width="20" height="20" rx="3" />
        <rect x="7" y="31" width="20" height="20" rx="3" />
        <rect x="32" y="31" width="20" height="20" rx="3" />
        <path d="M42 4.500L53 15.500L42 26.500L31 15.500Z" strokeLinejoin="round" />
      </>
    ),
  },
  {
    name: "设自选",
    icon: (
      <>
        <circle cx="30" cy="28" r="24.500" />
        <path d="M17.500 28H21.500M28 28H32M38.500 28H42.500" strokeWidth="4.500" />
      </>
    ),
  },
];

const BottomNav = () => (
  <div className="flex h-[124px] bg-[#f6f7fa] text-[32px] leading-none text-[#666]">
    <div className="flex w-[252px] flex-col pl-[11px] text-[#0f8f0f]">
      <svg className="ml-[105px] mt-[8px] h-[7px] w-[21px]" viewBox="0 0 21 7" fill="#777">
        <path d="M0 7L10.500 0L21 7Z" />
      </svg>
      <span className="ml-[51px] mt-[10px] text-[38px] leading-[37px] tracking-[-0.055em]">1972.52</span>
      <div className="mt-[8px] flex items-center whitespace-nowrap text-[30px]">
        <span className="mr-[11px] text-[32.500px] leading-[34px] text-[#666]">消费电子</span>
        <span className="tracking-[-0.02em]">−0.60%</span>
      </div>
    </div>
    {navItems.map((item) => (
      <div key={item.name} className="flex w-[206.700px] flex-col items-center pt-[7px]">
        <svg className="h-[56px] w-[60px]" viewBox="0 0 60 56" fill="none" stroke="#666" strokeWidth="3">
          {item.icon}
        </svg>
        <span className="mt-[16px]">{item.name}</span>
      </div>
    ))}
  </div>
);

export default function App() {
  return (
    <main className="h-[2400px] w-[1080px] overflow-hidden bg-white font-['Noto_Sans','Noto_Sans_CJK_SC',sans-serif]">
      <StatusBar />
      <Header />
      <div className="flex h-[110px] items-center justify-between bg-[#fdede5] pl-[34px] pr-[41px] text-[39px] text-[#d9601b]">
        一键开通科创成长层权限！把握打新、交易机会
        <Cross className="size-[29px]" width={3} />
      </div>
      <Quote />
      <div className="flex h-[96px] items-center border-b-2 border-[#dcdcdc] pl-[27px] pr-[28px] text-[36px] text-[#2b2b2b]">
        <svg className="h-[40px] w-[48px]" viewBox="0 0 48 40" fill="none" stroke="#dd6a22" strokeWidth="3.400" strokeLinejoin="round">
          <path d="M2 9H10L22 2V38L10 31H2Z" />
          <path d="M29 12Q35 20 29 28M31 3Q47 8 45 20Q47 32 31 37" />
        </svg>
        <span className="ml-[28px] flex-1">自选分析：触发重点关注信号，立即点击查看</span>
        <Cross className="size-[27px] text-[#999]" width={2.6} />
      </div>
      <Tabs />
      <div className="flex h-[58px] items-center whitespace-nowrap border-b-2 border-[#dcdcdc] pl-[11px] pr-[8px] text-[33px] leading-none text-[#d3302f]">
        <span className="w-[99px] text-[#ecb94f]">均价：</span>
        <span className="w-[98px] text-[34px] text-[#ecb94f]">50.64</span>
        <span className="w-[98px]">最新：</span>
        <span className="w-[110px] text-[34px]">53.83</span>
        <span className="w-[91px] text-[34px]">4.89</span>
        <span className="text-[34px] tracking-[-0.045em]">9.99%</span>
        <span className="ml-auto flex size-[30px] items-center justify-center rounded-full border-2 border-[#999] text-[22px] text-[#999]">?</span>
        <button className="ml-[11px] h-[44px] w-[142px] rounded-[7px] border-2 border-[#dfe1e4] bg-[#f6f7fa] text-[29.500px] leading-none text-[#222]">大单模式</button>
      </div>
      <div className="flex h-[1291px]">
        <Charts />
        <OrderBook />
      </div>
      <CommentBar />
      <BottomNav />
      <div className="mx-auto mt-[17px] h-[11px] w-[399px] rounded-full bg-[#333]" />
    </main>
  );
}
